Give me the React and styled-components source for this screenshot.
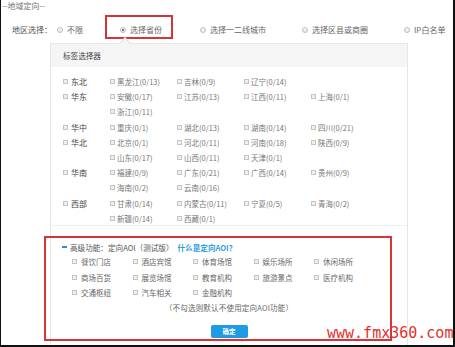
import styled, { createGlobalStyle } from "styled-components";

const GlobalStyle = createGlobalStyle`
  html, body {
    margin: 0;
    padding: 0;
    background: #fff;
  }
  * {
    box-sizing: border-box;
  }
`;

const Page = styled.div`
  position: relative;
  width: 455px;
  height: 347px;
  overflow: hidden;
  background: #fff;
  border-left: 1px solid #111;
  border-right: 2px solid #111;
  border-bottom: 2px solid #111;
  font-family: "Noto Sans CJK SC", "Noto Sans", sans-serif;
  color: #666;
`;

const Legend = styled.div`
  padding-left: 1px;
  font-size: 8px;
  line-height: 12px;
  color: #777;
`;

const ChoiceRow = styled.div`
  display: flex;
  align-items: center;
  gap: 36px;
  height: 14px;
  margin-top: 11px;
  padding-left: 11px;
  font-size: 8px;
  line-height: 14px;
`;

const ChoiceLabel = styled.span`
  width: 45px;
  margin-right: -36px;
  color: #555;
`;

const Option = styled.label`
  display: flex;
  align-items: center;
  white-space: nowrap;
  color: #666;
`;

// annotation box around the selected option
const Highlight = styled.div`
  display: flex;
  align-items: center;
  height: 24px;
  margin: 0 -9px 6px -14px;
  padding: 6px 9px 0 13px;
  border: 2px solid #d9333a;
`;

const Radio = styled.span`
  position: relative;
  width: 6px;
  height: 6px;
  margin-right: 4px;
  border-radius: 50%;
  border: 1px solid #bdbdbd;
  background: linear-gradient(#fafafa, #e6e6e6);

  &::after {
    content: "";
    display: ${(p) => (p.checked ? "block" : "none")};
    position: absolute;
    left: 1px;
    top: 1px;
    width: 2px;
    height: 2px;
    border-radius: 50%;
    background: #555;
  }
`;

const Panel = styled.div`
  position: relative;
  width: 358px;
  margin: 6px 0 0 49px;
  padding-bottom: 12px;
  border: 1px solid #e6e6e6;
  background: #fff;

  &::before {
    content: "";
    position: absolute;
    left: 70px;
    top: -5px;
    width: 7px;
    height: 7px;
    background: #f5f5f5;
    border-left: 1px solid #e2e2e2;
    border-top: 1px solid #e2e2e2;
    transform: rotate(45deg);
  }
`;

const PanelHead = styled.div`
  height: 23px;
  padding-left: 12px;
  background: #f5f5f5;
  font-size: 7.6px;
  line-height: 23px;
  color: #444;
`;

const PanelBody = styled.div`
  padding: 7px 0 0 12px;
  height: 159px;
  border-bottom: 1px solid #e8f2f2;
`;

const Group = styled.div`
  display: flex;
`;

const Region = styled.div`
  display: flex;
  align-items: center;
  width: 47px;
  height: 15.2px;
  font-size: 8px;
  color: #444;
`;

const Provinces = styled.div`
  display: grid;
  grid-template-columns: repeat(4, 67px);
  grid-auto-rows: 15.2px;
`;

const Item = styled.div`
  display: flex;
  align-items: center;
  white-space: nowrap;
  font-size: 7.5px;
  color: ${(p) => p.color || "#777"};
`;

const Check = styled.span`
  flex: none;
  width: 5px;
  height: 5px;
  margin-right: ${(p) => p.gap || 2}px;
  border: 1px solid #c4c4c4;
  background: #efefef;
`;

const AoiBox = styled.div`
  width: 348px;
  height: 105px;
  margin: 10px 0 0 -7px;
  padding: 2px 0 0 16px;
  border: 2px solid #d9333a;
`;

const AoiHead = styled.div`
  display: flex;
  align-items: center;
  height: 14px;
  font-size: 7.6px;
  color: #555;
`;

const Dash = styled.span`
  width: 5px;
  height: 2px;
  margin-right: 3px;
  background: #2b8fd3;
`;

const HelpLink = styled.span`
  margin-left: 4px;
  color: #2d9ee0;
  font-weight: 700;
`;

const AoiGrid = styled.div`
  display: grid;
  grid-template-columns: repeat(5, 60.5px);
  grid-auto-rows: 15.5px;
  padding-left: 10px;
`;

const AoiFoot = styled.div`
  display: flex;
  flex-direction: column;
  align-items: center;
  padding-left: 6px;
`;

const Note = styled.div`
  height: 14px;
  font-size: 7.5px;
  line-height: 14px;
  color: #666;
  letter-spacing: 0.2px;
`;

const Confirm = styled.button`
  width: 37px;
  height: 13px;
  margin-top: 10px;
  padding: 0;
  border: none;
  border-radius: 2px;
  background: #1e9be3;
  color: #fff;
  font-family: inherit;
  font-size: 6.5px;
  font-weight: 700;
`;

const Watermark = styled.div`
  position: absolute;
  left: 326px;
  top: 324px;
  font-family: "DejaVu Sans Mono", "Liberation Mono", monospace;
  font-size: 15px;
  line-height: 18px;
  color: #e3302b;
  white-space: nowrap;
`;

const regions = [
  ["东北", ["黑龙江(0/13)", "吉林(0/9)", "辽宁(0/14)"]],
  ["华东", ["安徽(0/17)", "江苏(0/13)", "江西(0/11)", "上海(0/1)", "浙江(0/11)"]],
  ["华中", ["重庆(0/1)", "湖北(0/13)", "湖南(0/14)", "四川(0/21)"]],
  ["华北", ["北京(0/1)", "河北(0/11)", "河南(0/18)", "陕西(0/9)", "山东(0/17)", "山西(0/11)", "天津(0/1)"]],
  ["华南", ["福建(0/9)", "广东(0/21)", "广西(0/14)", "贵州(0/9)", "海南(0/2)", "云南(0/16)"]],
  ["西部", ["甘肃(0/14)", "内蒙古(0/11)", "宁夏(0/5)", "青海(0/2)", "新疆(0/14)", "西藏(0/1)"]],
];

const aoiTypes = [
  "餐饮门店", "酒店宾馆", "体育场馆", "娱乐场所", "休闲场所",
  "商场百货", "展览场馆", "教育机构", "旅游景点", "医疗机构",
  "交通枢纽", "汽车相关", "金融机构",
];

const App = () => {
  return (
    <Page>
      <GlobalStyle />
      <Legend>--地域定向--</Legend>
      <ChoiceRow>
        <ChoiceLabel>地区选择：</ChoiceLabel>
        <Option>
          <Radio />
          不限
        </Option>
        <Highlight>
          <Option>
            <Radio checked />
            选择省份
          </Option>
        </Highlight>
        <Option>
          <Radio />
          选择一二线城市
        </Option>
        <Option>
          <Radio />
          选择区县或商圈
        </Option>
        <Option>
          <Radio />
          IP白名单
        </Option>
      </ChoiceRow>

      <Panel>
        <PanelHead>标签选择器</PanelHead>
        <PanelBody>
          {regions.map(([name, list]) => (
            <Group key={name}>
              <Region>
                <Check gap={3} />
                {name}
              </Region>
              <Provinces>
                {list.map((p) => (
                  <Item key={p}>
                    <Check gap={2} />
                    {p}
                  </Item>
                ))}
              </Provinces>
            </Group>
          ))}
        </PanelBody>

        <AoiBox>
          <AoiHead>
            <Dash />
            高级功能：定向AOI（测试版）
            <HelpLink>什么是定向AOI？</HelpLink>
          </AoiHead>
          <AoiGrid>
            {aoiTypes.map((t) => (
              <Item key={t} color="#666">
                <Check gap={4} />
                {t}
              </Item>
            ))}
          </AoiGrid>
          <AoiFoot>
            <Note>（不勾选则默认不使用定向AOI功能）</Note>
            <Confirm>确定</Confirm>
          </AoiFoot>
        </AoiBox>
      </Panel>

      <Watermark>www.fmx360.com</Watermark>
    </Page>
  );
};

export default App;
